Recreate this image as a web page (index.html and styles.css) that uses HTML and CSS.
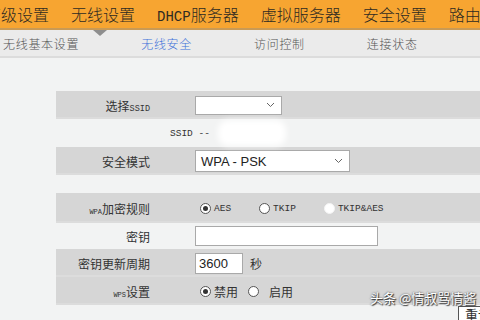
FILE: index.html
```html
<!DOCTYPE HTML>
<html lang="zh">
<head>
<meta name="viewport" content="width=device-width, initial-scale=1">
<title>无线安全</title>
<link rel="stylesheet" href="styles.css">
</head>
<body>

<div class="topnav">
  <span class="top-item first">高级设置</span>
  <span class="top-item">无线设置</span>
  <span class="top-item"><span class="latin">DHCP</span>服务器</span>
  <span class="top-item">虚拟服务器</span>
  <span class="top-item">安全设置</span>
  <span class="top-item">路由设置</span>
</div>

<div class="subnav">
  <span class="caret"></span>
  <span class="sub-item">无线基本设置</span>
  <span class="sub-item active">无线安全</span>
  <span class="sub-item">访问控制</span>
  <span class="sub-item">连接状态</span>
</div>

<div class="form">
  <div class="row band">
    <div class="label">选择<span class="mono small">SSID</span></div>
    <div class="value">
      <div class="select short">
        <svg class="chev" width="9" height="6" viewBox="0 0 9 6"><polyline points="1,1 4.5,4.5 8,1" fill="none" stroke="#666" stroke-width="1"/></svg>
      </div>
    </div>
  </div>

  <div class="row plain">
    <div class="ssid-line"><span class="mono">SSID --</span><span class="blur"></span></div>
  </div>

  <div class="row band">
    <div class="label">安全模式</div>
    <div class="value">
      <div class="select long">
        <span class="select-text">WPA - PSK</span>
        <svg class="chev" width="9" height="6" viewBox="0 0 9 6"><polyline points="1,1 4.5,4.5 8,1" fill="none" stroke="#666" stroke-width="1"/></svg>
      </div>
    </div>
  </div>

  <div class="spacer"></div>

  <div class="row band tall">
    <div class="label"><span class="mono tiny">WPA</span>加密规则</div>
    <div class="value radios">
      <span class="opt"><span class="radio checked"></span><span class="mono">AES</span></span>
      <span class="opt"><span class="radio"></span><span class="mono">TKIP</span></span>
      <span class="opt"><span class="radio faint"></span><span class="mono">TKIP&amp;AES</span></span>
    </div>
  </div>

  <div class="row plain short-row">
    <div class="label">密钥</div>
    <div class="value"><div class="input key"></div></div>
  </div>

  <div class="row band">
    <div class="label">密钥更新周期</div>
    <div class="value">
      <div class="input period">3600</div>
      <span class="unit">秒</span>
    </div>
  </div>

  <div class="row band">
    <div class="label"><span class="mono tiny">WPS</span>设置</div>
    <div class="value radios narrow">
      <span class="opt"><span class="radio checked"></span>禁用</span>
      <span class="opt"><span class="radio"></span><span class="pad">启用</span></span>
    </div>
  </div>

  <div class="actions">
    <span class="button">重设</span>
  </div>
</div>

<div class="watermark">头条 @情叔骂情酱</div>

</body>
</html>
```

FILE: styles.css
```css
/* Page */
body {
  margin: 0;
  background: #f2f3f3;
  font-family: "Noto Sans CJK SC", sans-serif;
  color: #333333;
  overflow: hidden;
  height: 320px;
  position: relative;
}

.mono {
  font-family: "Liberation Mono", "Noto Sans CJK SC", monospace;
  font-size: 9.5px;
}

.mono.small {
  font-size: 8.5px;
}

.mono.tiny {
  font-size: 7px;
}

/* Orange top menu */
.topnav {
  height: 28px;
  background: #f7a531;
  border-bottom: 2px solid #c99a55;
  display: flex;
  align-items: center;
  gap: 22px;
  white-space: nowrap;
  font-size: 16px;
  font-weight: 300;
  color: #2e2a22;
}

.top-item.first {
  margin-left: -15px;
}

.latin {
  font-family: "Liberation Mono", monospace;
  font-size: 14px;
}

/* Grey sub menu */
.subnav {
  position: relative;
  height: 25px;
  background: #ebebeb;
  border-bottom: 2px solid #dcdcdc;
  display: flex;
  align-items: center;
  padding: 1px 0 0 3px;
  gap: 62px;
  font-size: 12px;
  font-weight: 300;
  letter-spacing: 0.7px;
  color: #555555;
  white-space: nowrap;
}

.sub-item.active {
  color: #3f72d9;
}

.caret {
  position: absolute;
  left: 93px;
  top: 0;
  width: 0;
  height: 0;
  border-left: 7px solid transparent;
  border-right: 7px solid transparent;
  border-top: 6px solid #8e8e8e;
}

/* Form rows */
.form {
  margin: 33px 0 0 56px;
}

.row {
  display: grid;
  grid-template-columns: 94px 1fr;
  column-gap: 45px;
  align-items: center;
  height: 28px;
  font-size: 12px;
}

.row.band {
  background: #d6d6d6;
  box-shadow: inset 0 -2px 0 #dcdcdc;
}

.row.tall {
  height: 30px;
}

.row.short-row {
  height: 26px;
}

.spacer {
  height: 18px;
}

.label {
  text-align: right;
  white-space: nowrap;
}

.value {
  display: flex;
  align-items: center;
}

.ssid-line {
  grid-column: 1 / 3;
  padding-left: 114px;
  display: flex;
  align-items: center;
}

.blur {
  display: inline-block;
  width: 68px;
  height: 26px;
  margin-left: 8px;
  background: #ffffff;
  border-radius: 10px;
  filter: blur(3px);
}

/* Controls */
.select {
  background: #ffffff;
  border: 1px solid #a9a9a9;
  box-sizing: border-box;
  display: flex;
  align-items: center;
  justify-content: space-between;
  padding: 0 6px 0 5px;
}

.select.short {
  width: 87px;
  height: 19px;
  justify-content: flex-end;
}

.select.long {
  width: 155px;
  height: 22px;
}

.select-text {
  font-family: "Liberation Sans", sans-serif;
  font-size: 13px;
  color: #222222;
}

.input {
  background: #ffffff;
  border: 1px solid #a9a9a9;
  box-sizing: border-box;
}

.input.key {
  width: 183px;
  height: 20px;
}

.input.period {
  width: 48px;
  height: 21px;
  padding-left: 3px;
  font-family: "Liberation Sans", sans-serif;
  font-size: 13px;
  line-height: 19px;
  color: #222222;
}

.unit {
  margin-left: 7px;
  font-size: 12px;
}

.radios {
  padding-left: 5px;
  gap: 28px;
}

.radios.narrow {
  gap: 10px;
}

.opt {
  display: flex;
  align-items: center;
  gap: 3px;
}

.radio {
  width: 11px;
  height: 11px;
  border: 1px solid #555555;
  border-radius: 50%;
  background: #ffffff;
  box-sizing: border-box;
  position: relative;
}

.radio.checked::after {
  content: "";
  position: absolute;
  left: 2px;
  top: 2px;
  width: 5px;
  height: 5px;
  border-radius: 50%;
  background: #333333;
}

.radio.faint {
  border-color: #f4f4f4;
}

.pad {
  margin-left: 7px;
}

.actions {
  display: flex;
  padding: 1px 0 0 402px;
}

.button {
  background: #ffffff;
  border-top: 1px solid #555555;
  border-left: 1px solid #555555;
  padding: 0 6px;
  font-size: 13px;
  line-height: 16px;
  white-space: nowrap;
}

/* Watermark overlay */
.watermark {
  position: absolute;
  left: 370px;
  top: 288px;
  font-size: 13px;
  color: #ffffff;
  white-space: nowrap;
  text-shadow: 0 0 2px #333333, 1px 1px 1px #333333;
}
```
